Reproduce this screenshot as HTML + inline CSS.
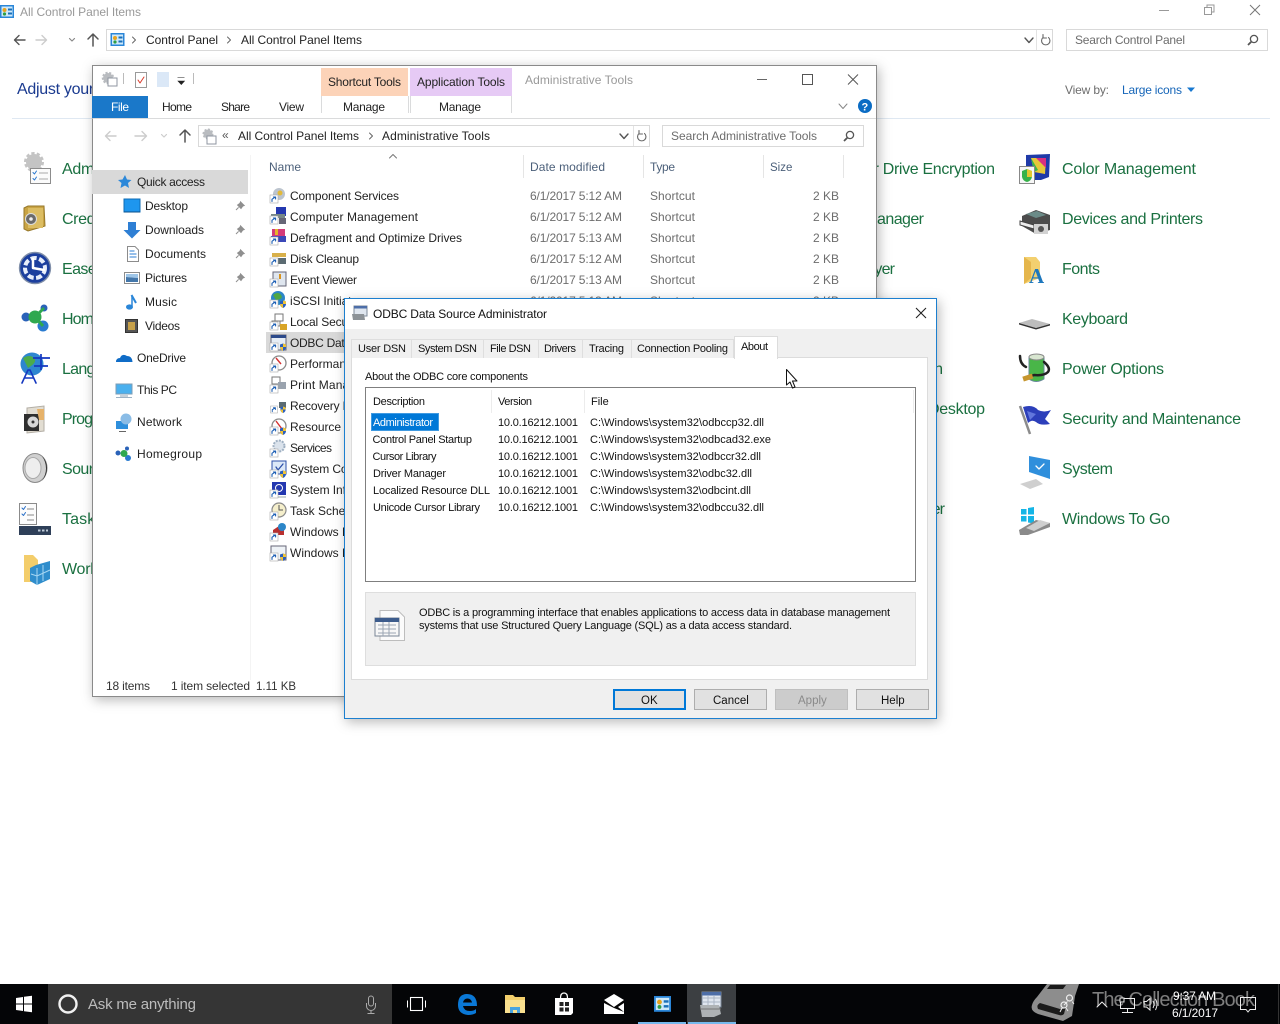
<!DOCTYPE html>
<html lang="en"><head><meta charset="utf-8"><title>ODBC Data Source Administrator</title>
<style>
html,body{margin:0;padding:0;background:#fff;overflow:hidden}
svg{display:block}
text{font-family:"Liberation Sans",Arial,sans-serif;font-size:12px;fill:#333;white-space:pre}
.cp{font-size:16px;fill:#1a7040}
.nm{fill:#222}.g{fill:#6d6d6d}.h{fill:#4c607a}
.dl{font-size:11px;fill:#111}
.bt{font-size:11.5px;fill:#111}
.ln{fill:none;stroke-linecap:round;stroke-linejoin:round}
</style></head><body>
<svg xmlns="http://www.w3.org/2000/svg" width="1280" height="1024" viewBox="0 0 1280 1024">
<defs>
<filter id="sh" x="-5%" y="-5%" width="110%" height="110%"><feDropShadow dx="2" dy="3" stdDeviation="6" flood-color="#000" flood-opacity=".28"/></filter>
<symbol id="cpi" viewBox="0 0 14 14" overflow="visible"><rect width="14" height="13" fill="#2a86d8"/><rect x="1.5" y="1.5" width="11" height="10" fill="#cfe9fa"/><circle cx="4.5" cy="5" r="2" fill="#e6a31e"/><circle cx="4.5" cy="9" r="1.6" fill="#2f9e44"/><rect x="8" y="3.5" width="4" height="2" fill="#1a6fb8"/><rect x="8" y="7.5" width="4" height="2" fill="#1a6fb8"/></symbol>
<symbol id="ar" viewBox="0 0 8 8" overflow="visible"><rect width="8" height="8" fill="#fff" stroke="#a8a8a8" stroke-width=".6"/><path d="M2 6.5 L2 4.2 L5.2 2.2 M3.4 2 L5.6 2 L5.6 4" class="ln" stroke="#1d5fb4" stroke-width="1.1"/></symbol>
<symbol id="shd" viewBox="0 0 8 8" overflow="visible"><path d="M1 1.5 L4 .5 L7 1.5 L7 4.5 Q6.5 7 4 8 Q1.5 7 1 4.5Z" fill="#2b5fbe"/><path d="M4 .5 L7 1.5 L7 4 L4 4Z M4 4 L1 4 Q1.5 7 4 8Z" fill="#f0c437"/></symbol>
<symbol id="pin" viewBox="0 0 10 10" overflow="visible"><path d="M5.5 .8 L9.2 4.5 L7.8 5 L6 7.5 L2.6 4.1 L5 2.3Z M3.6 6.4 L1 9" fill="#8f8f8f" stroke="#8f8f8f"/></symbol>
<symbol id="mag" viewBox="0 0 12 12" overflow="visible"><circle cx="7" cy="5" r="3.6" fill="none" stroke="#555" stroke-width="1.3"/><path d="M4.4 7.6 L1 11" stroke="#555" stroke-width="1.8" fill="none"/></symbol>
</defs>

<!-- Control Panel background window -->
<rect width="1280" height="1024" fill="#fff"/>
<use href="#cpi" x="0" y="5" width="14" height="14"/>
<text x="20" y="16" textLength="121" style="fill:#999">All Control Panel Items</text>
<path d="M1159 10.500H1169" stroke="#999" fill="none"/>
<path d="M1204.500 7.500h7v7h-7zM1207 7.500V5h7v7h-2.500" stroke="#999" fill="none"/>
<path d="M1250 5L1260 15M1260 5L1250 15" stroke="#777" fill="none"/>
<path d="M25 40H15M19 35.500L14.500 40L19 44.500" class="ln" stroke="#555" stroke-width="1.4"/>
<path d="M36 40H46M42 35.500L46.500 40L42 44.500" class="ln" stroke="#ccc" stroke-width="1.4"/>
<path d="M69.500 38.500L72 41L74.500 38.500" class="ln" stroke="#888" stroke-width="1.2"/>
<path d="M93 46V34.500M88 39L93 34L98 39" class="ln" stroke="#555" stroke-width="1.5"/>
<rect x="106.500" y="29.500" width="946" height="21" fill="#fff" stroke="#d9d9d9"/>
<path d="M1036.500 30V50" stroke="#e3e3e3"/>
<use href="#cpi" x="110" y="33" width="15" height="14"/>
<path d="M132.500 37L135.500 40L132.500 43" class="ln" stroke="#666"/>
<text x="146" y="44" textLength="72" class="nm">Control Panel</text>
<path d="M227.500 37L230.500 40L227.500 43" class="ln" stroke="#666"/>
<text x="241" y="44" textLength="121" class="nm">All Control Panel Items</text>
<path d="M1025 38L1029 42.500L1033 38" class="ln" stroke="#555" stroke-width="1.4"/>
<path d="M1043 37.500A4.200 4.200 0 1 0 1048.500 37.500M1043 34.500V38H1046.500" class="ln" stroke="#666" stroke-width="1.1"/>
<rect x="1066.500" y="29.500" width="201" height="21" fill="#fff" stroke="#d9d9d9"/>
<text x="1075" y="44" textLength="110" class="g">Search Control Panel</text>
<use href="#mag" x="1247" y="34" width="12" height="12"/>
<text x="17" y="94" textLength="214" style="font-size:16px;fill:#1a3a8f">Adjust your computer’s settings</text>
<path d="M12 118.500H1270" stroke="#dfe8f2"/>
<text x="1065" y="94" textLength="44" class="g">View by:</text>
<text x="1122" y="94" textLength="60" style="fill:#1565b8">Large icons</text>
<path d="M1187 87.500H1195L1191 92Z" fill="#1878d0"/>

<!-- Left column -->
<text x="62" y="174" class="cp" textLength="136">Administrative Tools</text>
<text x="62" y="224" class="cp" textLength="134">Credential Manager</text>
<text x="62" y="274" class="cp" textLength="150">Ease of Access Center</text>
<text x="62" y="324" class="cp" textLength="80">HomeGroup</text>
<text x="62" y="374" class="cp" textLength="66">Language</text>
<text x="62" y="424" class="cp" textLength="150">Programs and Features</text>
<text x="62" y="474" class="cp" textLength="44">Sound</text>
<text x="62" y="524" class="cp" textLength="170">Taskbar and Navigation</text>
<text x="62" y="574" class="cp" textLength="92">Work Folders</text>
<!-- Left icons -->
<circle cx="34" cy="162" r="8" fill="#c4c4c4" stroke="#c4c4c4" stroke-width="4" stroke-dasharray="3 2"/>
<rect x="30.500" y="168.500" width="20" height="15" fill="#fbfbfb" stroke="#8c8c8c"/>
<path d="M33 172.500l1.500 1.500 2-3M33 178.500l1.500 1.500 2-3" class="ln" stroke="#2c7ad0"/><path d="M39 173h9M39 179h9" stroke="#aaa"/>
<path d="M24 208L28 206H44L45 226L28 231L24 229Z" fill="#c9a444" stroke="#96772a"/><rect x="28" y="208" width="15" height="20" fill="#dcbd63"/><circle cx="31" cy="219" r="5.500" fill="#6b6b6b" stroke="#ddd"/><circle cx="31" cy="219" r="1.800" fill="#eee"/>
<circle cx="35" cy="268" r="15.500" fill="#1c3f9e" stroke="#7f8ea8" stroke-width="1.400"/><circle cx="35" cy="268" r="10" fill="none" stroke="#e8eefb" stroke-width="4" stroke-dasharray="6 2.500"/><path d="M33 259V268L44 270" class="ln" stroke="#fff" stroke-width="2.500"/>
<circle cx="26" cy="317" r="4.500" fill="#2a62b8"/><circle cx="44" cy="308" r="3.500" fill="#2a62b8"/><circle cx="43" cy="326" r="5.500" fill="#2a7bd0"/><circle cx="35" cy="317" r="6.500" fill="#2fa84f"/><path d="M35 317L44 308M35 317L43 326" stroke="#2fa84f" stroke-width="3"/>
<circle cx="32" cy="364" r="11.500" fill="#2e86d0"/><path d="M23 358Q30 354 34 358T28 368Z" fill="#4cab4a"/><path d="M33 358H50M41 354V370M34 366H48" stroke="#1538c0" stroke-width="1.700" fill="none"/><path d="M22 383L28 370H30L36 383M24.500 378H33.500" class="ln" stroke="#1538c0" stroke-width="1.600"/>
<path d="M27 408L44 406V431L27 433Z" fill="#e2ddd2" stroke="#b3aea5"/><rect x="24" y="414" width="15" height="17" fill="#2f2f2f"/><circle cx="33" cy="422" r="5.500" fill="#d8d8d8"/><circle cx="33" cy="422" r="1.500" fill="#333"/><path d="M37 409H44V420H39Z" fill="#e6b26a"/>
<ellipse cx="35" cy="468" rx="12" ry="14.500" fill="#d0d0d0" stroke="#8a8a8a"/><ellipse cx="33" cy="468" rx="8" ry="10.500" fill="#eee" stroke="#aaa"/><path d="M42 456Q50 468 42 481Q47 475 47 468T42 456" fill="#333"/>
<rect x="19.500" y="503.500" width="17" height="21" fill="#fcfcfc" stroke="#8b8b8b"/><path d="M22 508l1.500 1.500 2-3M22 514l1.500 1.500 2-3" class="ln" stroke="#2a70c8"/><path d="M27 509h7M27 515h7M27 520h7" stroke="#888"/><rect x="19" y="526" width="32" height="9" fill="#2e3f58"/><path d="M38 530.500h2.500M42 530.500h2.500M46 530.500h2" stroke="#bcc8d6" stroke-width="2"/>
<path d="M24 555H33L38 560V582H24Z" fill="#f3cd6b"/><path d="M36 565L50 561V579L37 585L30 581V568Z" fill="#2f8dcc"/><path d="M31 574L37 576L50 570M37 568V585M43 565V581" stroke="#a7d7f3" fill="none"/>

<!-- Middle column remnants -->
<text x="815" y="174" class="cp" textLength="180">BitLocker Drive Encryption</text>
<text x="815" y="224" class="cp" textLength="109">Device Manager</text>
<text x="815" y="274" class="cp" textLength="80">Flash Player</text>
<text x="840" y="374" class="cp" textLength="103">Personalization</text>
<text x="928" y="414" class="cp" textLength="57">Desktop</text>
<text x="865" y="514" class="cp" textLength="80">Sync Center</text>

<!-- Right column -->
<text x="1062" y="174" class="cp" textLength="134">Color Management</text>
<text x="1062" y="224" class="cp" textLength="141">Devices and Printers</text>
<text x="1062" y="274" class="cp" textLength="38">Fonts</text>
<text x="1062" y="324" class="cp" textLength="66">Keyboard</text>
<text x="1062" y="374" class="cp" textLength="102">Power Options</text>
<text x="1062" y="424" class="cp" textLength="179">Security and Maintenance</text>
<text x="1062" y="474" class="cp" textLength="51">System</text>
<text x="1062" y="524" class="cp" textLength="108">Windows To Go</text>
<!-- Right icons -->
<path d="M1026 155L1050 154L1049 177L1041 180H1026Z" fill="#1f3aa8"/><path d="M1031 158L1046 158L1045 174L1034 172Z" fill="#e6c73a"/><path d="M1036 158H1046V168Z" fill="#d9307f"/><path d="M1031 158L1038 170L1034 172Z" fill="#39b54a"/>
<rect x="1019.500" y="166.500" width="15" height="17" fill="#f7f7f7" stroke="#888"/><path d="M1022 171L1027 169L1032 171V177Q1031 181 1027 182Q1023 181 1022 177Z" fill="#36b24a"/><path d="M1027 169L1032 171V177H1027Z" fill="#e2c72f"/>
<path d="M1022 216L1036 210L1050 215L1050 230L1036 234L1022 226Z" fill="#4c4c4c"/><path d="M1026 214L1037 211L1046 215L1036 218Z" fill="#6b8b88"/><path d="M1020 221L1034 225V229L1020 225Z" fill="#eee" stroke="#444"/><rect x="1034" y="224" width="14" height="10" fill="#d2d2d2"/><circle cx="1041" cy="229" r="3" fill="#555"/>
<path d="M1024 257H1036L1040 262V278L1024 284Z" fill="#f3d06f"/><path d="M1024 257L1031 262V278L1024 284Z" fill="#e5b64c"/><text x="1029" y="283" style="font-family:'Liberation Serif',serif;font-size:21px;font-weight:700;fill:#1d77bd">A</text>
<path d="M1019 323L1032 319L1050 324L1036 328Z" fill="#bdbdbd"/><path d="M1019 323L1036 328L1050 324V325.500L1036 329.500L1019 324.500Z" fill="#333"/>
<path d="M1029 357Q1037 353 1044 357V379Q1036 384 1029 379Z" fill="#49b648" stroke="#689"/><ellipse cx="1036.500" cy="357" rx="7.500" ry="3" fill="#d8e6d0" stroke="#888"/><path d="M1020 356Q1020 364 1026 367M1044 362Q1051 368 1048 372Q1044 376 1034 375L1026 378" class="ln" stroke="#222" stroke-width="2.500"/><rect x="1023" y="375" width="10" height="5" transform="rotate(-18 1028 378)" fill="#c6962e"/>
<path d="M1020 406L1030 434" stroke="#8c8c8c" stroke-width="2.500"/><path d="M1023 407Q1033 404 1038 410Q1044 413 1051 410L1045 419L1050 424Q1040 426 1036 422Q1032 419 1028 423Z" fill="#2c3fba"/><path d="M1027 411L1036 414L1030 420Z" fill="#6277dc"/>
<path d="M1029 456L1050 460V479L1029 472Z" fill="#2f8fdc"/><path d="M1036 466l3 3 5-5" class="ln" stroke="#fff" stroke-width="1.300"/><path d="M1020 484L1036 479L1043 484L1030 489Z" fill="#cfcfcf"/>
<path d="M1021 509h5.500v5.500h-5.500zM1028 508v6.500h6v-7.500zM1021 516h5.500v5.500h-5.500zM1028 516h6v7.500l-6-1z" fill="#15b5e6"/><path d="M1019 530L1036 520L1050 523V527L1028 535H1020Z" fill="#8a8a8a"/><path d="M1026 528L1040 520L1050 523L1034 531Z" fill="#cfcfcf"/>

<!-- Explorer window -->
<rect x="92.500" y="65.500" width="784" height="631" fill="#fff" stroke="#8a8a8a" filter="url(#sh)"/>
<path d="M92.500 118.500H876" stroke="#dadbdc"/>
<circle cx="108" cy="78" r="5" fill="#b9bcc0" stroke="#b9bcc0" stroke-width="2.500" stroke-dasharray="2 1.500"/><rect x="108" y="78" width="9" height="8" fill="#fff" stroke="#8f96a0"/>
<path d="M123.500 73V84" stroke="#bbb"/>
<rect x="135.500" y="72.500" width="11" height="15" fill="#fff" stroke="#9a9a9a"/><path d="M138 80l2 3 4-6" class="ln" stroke="#d93a2b"/>
<rect x="157" y="72" width="12" height="15" fill="#dbe8f7"/>
<path d="M177.500 77.500h7M178 81h6.500l-3.200 3.500z" fill="#222" stroke="#222" stroke-width=".6"/>
<path d="M193.500 73V84" stroke="#bbb"/>
<rect x="321" y="68" width="87" height="28" fill="#fcd3b8"/><rect x="410" y="68" width="102" height="28" fill="#e6caf5"/>
<text x="328" y="86" textLength="73" class="nm">Shortcut Tools</text>
<text x="417" y="86" textLength="88" class="nm">Application Tools</text>
<text x="525" y="84" textLength="108" style="fill:#999">Administrative Tools</text>
<path d="M757 79.500H767" stroke="#666" fill="none"/><rect x="802.500" y="74.500" width="10" height="10" fill="none" stroke="#555"/><path d="M848 74.500L858 84.500M858 74.500L848 84.500" stroke="#555" fill="none"/>
<rect x="92" y="96" width="56" height="22" fill="#1a78c9"/>
<text x="111" y="111" textLength="18" style="fill:#fff">File</text>
<text x="162" y="111" textLength="30" class="nm">Home</text>
<text x="221" y="111" textLength="29" class="nm">Share</text>
<text x="279" y="111" textLength="25" class="nm">View</text>
<text x="343" y="111" textLength="42" class="nm">Manage</text>
<text x="439" y="111" textLength="42" class="nm">Manage</text>
<path d="M321.500 96V113M408.500 96V113M410.500 96V113M511.500 96V113" stroke="#dadbdc"/>
<path d="M839 104L843 108.500L847 104" class="ln" stroke="#888"/>
<circle cx="865" cy="106" r="7" fill="#0a6cc4"/><text x="861.500" y="110.500" style="font-weight:700;font-size:11px;fill:#fff">?</text>
<path d="M116 136H106M110 131.500L105.500 136L110 140.500" class="ln" stroke="#ccc" stroke-width="1.400"/>
<path d="M135 136H146M142 131.500L146.500 136L142 140.500" class="ln" stroke="#ccc" stroke-width="1.400"/>
<path d="M161.500 134.500L164 137L166.500 134.500" class="ln" stroke="#ccc" stroke-width="1.200"/>
<path d="M185 142V130.500M180 135L185 130L190 135" class="ln" stroke="#555" stroke-width="1.500"/>
<rect x="198.500" y="125.500" width="451" height="21" fill="#fff" stroke="#d9d9d9"/>
<path d="M633.500 126V146" stroke="#e3e3e3"/>
<circle cx="208" cy="134" r="4.500" fill="#b9bcc0" stroke="#b9bcc0" stroke-width="2" stroke-dasharray="2 1.500"/><rect x="207" y="136" width="9" height="8" fill="#fff" stroke="#8f96a0"/>
<text x="222" y="139" style="fill:#555">«</text>
<text x="238" y="140" textLength="121" class="nm">All Control Panel Items</text>
<path d="M369.500 133L372.500 136L369.500 139" class="ln" stroke="#666"/>
<text x="382" y="140" textLength="108" class="nm">Administrative Tools</text>
<path d="M620 134L624 138.500L628 134" class="ln" stroke="#555" stroke-width="1.400"/>
<path d="M639 133.500A4.200 4.200 0 1 0 644.500 133.500M639 130.500V134H642.500" class="ln" stroke="#666" stroke-width="1.100"/>
<rect x="662.500" y="125.500" width="201" height="21" fill="#fff" stroke="#d9d9d9"/>
<text x="671" y="140" textLength="146" class="g">Search Administrative Tools</text>
<use href="#mag" x="843" y="130" width="12" height="12"/>

<!-- Nav pane -->
<path d="M250.500 155V680" stroke="#f4f4f4"/>
<rect x="92" y="170" width="156" height="24" fill="#d9d9d9"/>
<path d="M125 175L127 179.500L131.500 180L128 183L129 188L125 185.500L120.500 188L121.500 183L118 180L122.500 179.500Z" fill="#2c88d9"/>
<text x="137" y="186" textLength="68" class="nm">Quick access</text>
<rect x="124" y="199" width="16" height="13" fill="#1e96ee" stroke="#0f6cb5"/><path d="M124 212h16" stroke="#0a4f8a"/>
<text x="145" y="210" textLength="43" class="nm">Desktop</text>
<path d="M128 222H136V230H140.500L132 238.500L123.500 230H128Z" fill="#2e7fd4"/>
<text x="145" y="234" textLength="59" class="nm">Downloads</text>
<path d="M127.500 246.500H135L138.500 250V261.500H127.500Z" fill="#fff" stroke="#8c8c8c"/><path d="M129.500 251h5M129.500 254h7M129.500 257h7" stroke="#2e7fd4"/>
<text x="145" y="258" textLength="61" class="nm">Documents</text>
<rect x="124.500" y="272.500" width="15" height="11" fill="#fff" stroke="#8c8c8c"/><path d="M126 274h12v4l-12-1z" fill="#9fc6e8"/><path d="M126 277l12 1v4h-12z" fill="#47a"/>
<text x="145" y="282" textLength="42" class="nm">Pictures</text>
<path d="M131.500 295L136 303" stroke="#2a86d8" stroke-width="2" fill="none"/><path d="M132 296V306" stroke="#2a86d8" stroke-width="1.500"/><ellipse cx="129.500" cy="307" rx="3.500" ry="2.600" fill="#2a86d8"/>
<text x="145" y="306" textLength="32" class="nm">Music</text>
<rect x="125.500" y="319.500" width="12" height="13" fill="#555" stroke="#333"/><rect x="128" y="322" width="7" height="8" fill="#c7a14a"/>
<text x="145" y="330" textLength="35" class="nm">Videos</text>
<use href="#pin" x="235" y="201" width="10" height="10"/><use href="#pin" x="235" y="225" width="10" height="10"/><use href="#pin" x="235" y="249" width="10" height="10"/><use href="#pin" x="235" y="273" width="10" height="10"/>
<path d="M116 362Q116 358 120 358Q122 353 127 356Q132 356 132.500 362Z" fill="#0f6cc7"/>
<text x="137" y="362" textLength="49" class="nm">OneDrive</text>
<rect x="116" y="384" width="16" height="10" fill="#4ab0ee" stroke="#7e9db5"/><path d="M116 397.500h16" stroke="#9db2c4"/><path d="M120 396h8" stroke="#8fa3b5"/>
<text x="137" y="394" textLength="40" class="nm">This PC</text>
<rect x="116" y="421" width="12" height="8" fill="#2e8fdc"/><circle cx="126" cy="419" r="5.500" fill="#8abce6"/><path d="M119 431.500h7" stroke="#666"/>
<text x="137" y="426" textLength="45" class="nm">Network</text>
<circle cx="118" cy="453" r="2.500" fill="#2a62b8"/><circle cx="127" cy="448.500" r="2" fill="#2a62b8"/><circle cx="128" cy="458" r="3" fill="#2a7bd0"/><circle cx="124" cy="453.500" r="3.500" fill="#2fa84f"/>
<text x="137" y="458" textLength="65" class="nm">Homegroup</text>

<!-- Column header -->
<path d="M389.500 158L393 154.500L396.500 158" class="ln" stroke="#777"/>
<text x="269" y="171" textLength="32" class="h">Name</text>
<text x="530" y="171" textLength="75" class="h">Date modified</text>
<text x="650" y="171" textLength="25" class="h">Type</text>
<text x="770" y="171" class="h" style="font-size:11.5px">Size</text>
<path d="M523.500 155V178M643.500 155V178M763.500 155V178M843.500 155V178" stroke="#e5e5e5"/>

<!-- Selected row -->
<rect x="266" y="332" width="100" height="21" fill="#d9d9d9"/>

<!-- File icons -->
<g>
<circle cx="279" cy="194" r="6" fill="#bcc4ce"/><circle cx="280" cy="193" r="2.500" fill="#e2b93a"/><use href="#ar" x="270" y="195" width="8" height="8"/>
<rect x="276" y="207" width="10" height="9" fill="#2438b0"/><rect x="271" y="214" width="14" height="4" fill="#788"/><use href="#ar" x="270" y="216" width="8" height="8"/><rect x="279" y="218" width="7" height="6" fill="#667"/>
<rect x="272" y="229" width="13" height="8" fill="#d43b7a"/><rect x="271" y="236" width="15" height="6" fill="#3b48b8"/><rect x="275" y="229" width="3" height="6" fill="#e6b52a"/><use href="#ar" x="270" y="237" width="8" height="8"/>
<rect x="272" y="253" width="14" height="4" fill="#d8b04a"/><rect x="272" y="258" width="14" height="6" fill="#5b6b72"/><use href="#ar" x="270" y="258" width="8" height="8"/>
<rect x="273" y="272" width="13" height="14" fill="#dfe6ef" stroke="#667"/><path d="M279 274h2v5h-2z" fill="#d8931e"/><use href="#ar" x="270" y="279" width="8" height="8"/>
<circle cx="278" cy="298" r="7" fill="#2c86c8"/><path d="M273 295q5-4 8 0t-5 5z" fill="#4fa743"/><use href="#ar" x="270" y="300" width="8" height="8"/><use href="#shd" x="279" y="300" width="8" height="8"/>
<rect x="275" y="314" width="8" height="7" fill="#fff" stroke="#777"/><rect x="272" y="321" width="8" height="5" fill="#fff" stroke="#777"/><use href="#ar" x="270" y="322" width="8" height="8"/><rect x="280" y="324" width="7" height="6" fill="#d8a426"/>
<rect x="271" y="335" width="15" height="15" fill="#e6edf5" stroke="#667"/><rect x="271" y="335" width="15" height="3" fill="#2d4a8a"/><use href="#ar" x="270" y="343" width="8" height="8"/><use href="#shd" x="279" y="343" width="8" height="8"/>
<circle cx="279" cy="363" r="7" fill="#fff" stroke="#8a8a8a" stroke-width="1.300"/><path d="M276 358L281 364" stroke="#d43030" stroke-width="1.400"/><use href="#ar" x="270" y="364" width="8" height="8"/>
<rect x="272" y="377" width="8" height="7" fill="#fff" stroke="#777"/><rect x="278" y="382" width="8" height="7" fill="#9aa3ae"/><use href="#ar" x="270" y="385" width="8" height="8"/>
<rect x="279" y="402" width="7" height="6" fill="#5b6b72"/><use href="#ar" x="270" y="406" width="8" height="7"/><use href="#shd" x="279" y="406" width="8" height="7"/>
<circle cx="279" cy="426" r="7" fill="#fff" stroke="#8a8a8a" stroke-width="1.300"/><path d="M276 421L282 429" stroke="#d43030" stroke-width="1.400"/><use href="#ar" x="270" y="427" width="8" height="8"/><use href="#shd" x="279" y="427" width="8" height="8"/>
<circle cx="279" cy="446" r="5.500" fill="#dbe3ec" stroke="#9fb0c2" stroke-width="2" stroke-dasharray="2 1.200"/><use href="#ar" x="270" y="449" width="8" height="8"/>
<rect x="272" y="461" width="14" height="13" fill="#dce8f8" stroke="#2c4fa8"/><path d="M276 467l2 3 5-6" class="ln" stroke="#2c4fa8" stroke-width="1.300"/><use href="#ar" x="270" y="470" width="8" height="8"/><use href="#shd" x="279" y="470" width="8" height="8"/>
<rect x="272" y="482" width="14" height="13" fill="#2438b0"/><circle cx="279" cy="488" r="3.500" fill="none" stroke="#fff"/><path d="M270 497h16" stroke="#9aa"/><use href="#ar" x="270" y="490" width="8" height="8"/>
<circle cx="279" cy="510" r="7" fill="#f5efcc" stroke="#8a8a8a" stroke-width="1.200"/><path d="M279 505V510H283" stroke="#555" fill="none"/><use href="#ar" x="270" y="512" width="8" height="8"/>
<path d="M273 530L279 526L284 530V535H273Z" fill="#b83030"/><circle cx="282" cy="527" r="4" fill="#2c86c8"/><use href="#ar" x="270" y="533" width="8" height="8"/>
<rect x="271" y="546" width="15" height="14" fill="#eef2f6" stroke="#667"/><use href="#ar" x="270" y="553" width="8" height="8"/><use href="#shd" x="279" y="553" width="8" height="8"/>
</g>

<!-- File rows -->
<text x="290" y="200" textLength="109" class="nm">Component Services</text>
<text x="290" y="221" textLength="128" class="nm">Computer Management</text>
<text x="290" y="242" textLength="172" class="nm">Defragment and Optimize Drives</text>
<text x="290" y="263" textLength="69" class="nm">Disk Cleanup</text>
<text x="290" y="284" textLength="67" class="nm">Event Viewer</text>
<text x="290" y="305" textLength="72" class="nm">iSCSI Initiator</text>
<text x="290" y="326" textLength="108" class="nm">Local Security Policy</text>
<text x="290" y="347" textLength="145" class="nm">ODBC Data Sources (32-bit)</text>
<text x="290" y="368" textLength="112" class="nm">Performance Monitor</text>
<text x="290" y="389" textLength="100" class="nm">Print Management</text>
<text x="290" y="410" textLength="80" class="nm">Recovery Drive</text>
<text x="290" y="431" textLength="94" class="nm">Resource Monitor</text>
<text x="290" y="452" textLength="42" class="nm">Services</text>
<text x="290" y="473" textLength="112" class="nm">System Configuration</text>
<text x="290" y="494" textLength="102" class="nm">System Information</text>
<text x="290" y="515" textLength="82" class="nm">Task Scheduler</text>
<text x="290" y="536" class="nm">Windows Firewall</text>
<text x="290" y="557" class="nm">Windows Memory Diagnostic</text>
<g class="g">
<text x="530" y="200" textLength="92" class="g">6/1/2017 5:12 AM</text><text x="650" y="200" textLength="45" class="g">Shortcut</text><text x="813" y="200" class="g">2 KB</text>
<text x="530" y="221" textLength="92" class="g">6/1/2017 5:12 AM</text><text x="650" y="221" textLength="45" class="g">Shortcut</text><text x="813" y="221" class="g">2 KB</text>
<text x="530" y="242" textLength="92" class="g">6/1/2017 5:13 AM</text><text x="650" y="242" textLength="45" class="g">Shortcut</text><text x="813" y="242" class="g">2 KB</text>
<text x="530" y="263" textLength="92" class="g">6/1/2017 5:12 AM</text><text x="650" y="263" textLength="45" class="g">Shortcut</text><text x="813" y="263" class="g">2 KB</text>
<text x="530" y="284" textLength="92" class="g">6/1/2017 5:13 AM</text><text x="650" y="284" textLength="45" class="g">Shortcut</text><text x="813" y="284" class="g">2 KB</text>
<text x="530" y="305" textLength="92" class="g">6/1/2017 5:13 AM</text><text x="650" y="305" textLength="45" class="g">Shortcut</text><text x="813" y="305" class="g">2 KB</text>
</g>

<!-- Status bar -->
<text x="106" y="690" textLength="44">18 items</text>
<text x="171" y="690" textLength="79">1 item selected</text>
<text x="256" y="690" style="font-size:11.5px">1.11 KB</text>

<!-- ODBC dialog -->
<rect x="344.500" y="298.500" width="592" height="420" fill="#f0f0f0" stroke="#1a7fcf" filter="url(#sh)"/>
<rect x="345" y="299" width="591" height="30" fill="#fff"/>
<rect x="354" y="306" width="13" height="10" fill="#dfe6ef" stroke="#7d8a9a"/><rect x="354" y="306" width="13" height="2.500" fill="#4d6ea8"/><path d="M352 314H364L365 320H353Z" fill="#8c9297"/>
<text x="373" y="318" textLength="174" style="fill:#111">ODBC Data Source Administrator</text>
<path d="M916 308L926 318M926 308L916 318" stroke="#222" stroke-width="1.100" fill="none"/>

<rect x="351.500" y="357.500" width="576" height="322" fill="#fff" stroke="#dcdcdc"/>
<path d="M351.500 358V339.500H733.500V358M411.500 340V358M483.500 340V358M538.500 340V358M582.500 340V358M631.500 340V358" fill="#f0f0f0" stroke="#dedede"/>
<rect x="734.500" y="336.500" width="43" height="22" fill="#fff" stroke="#dcdcdc"/><rect x="735" y="355" width="42" height="4" fill="#fff"/>
<text x="358" y="352" textLength="48" class="dl">User DSN</text>
<text x="418" y="352" textLength="59" class="dl">System DSN</text>
<text x="490" y="352" textLength="41" class="dl">File DSN</text>
<text x="544" y="352" textLength="32" class="dl">Drivers</text>
<text x="589" y="352" textLength="35" class="dl">Tracing</text>
<text x="637" y="352" textLength="91" class="dl">Connection Pooling</text>
<text x="741" y="350" textLength="27" class="dl">About</text>

<text x="365" y="380" textLength="163" class="dl">About the ODBC core components</text>
<rect x="365.500" y="387.500" width="550" height="194" fill="#fff" stroke="#7f7f7f"/>
<path d="M491.500 390V413M584.500 390V413M913.500 390V413" stroke="#ececec"/>
<text x="373" y="405" textLength="52" class="dl">Description</text>
<text x="498" y="405" textLength="34" class="dl">Version</text>
<text x="591" y="405" class="dl">File</text>
<rect x="371" y="413" width="68" height="18" fill="#0078d7"/><rect x="371.500" y="413.500" width="67" height="17" fill="none" stroke="#fff" stroke-dasharray="1 1" stroke-opacity=".5"/>
<text x="373" y="426" textLength="60" class="dl" style="fill:#fff">Administrator</text>
<text x="372.500" y="443" textLength="99.500" class="dl">Control Panel Startup</text>
<text x="372.500" y="460" textLength="64" class="dl">Cursor Library</text>
<text x="373" y="477" textLength="73" class="dl">Driver Manager</text>
<text x="373" y="494" textLength="117" class="dl">Localized Resource DLL</text>
<text x="373" y="511" textLength="107" class="dl">Unicode Cursor Library</text>
<text x="498" y="426" textLength="80" class="dl">10.0.16212.1001</text>
<text x="498" y="443" textLength="80" class="dl">10.0.16212.1001</text>
<text x="498" y="460" textLength="80" class="dl">10.0.16212.1001</text>
<text x="498" y="477" textLength="80" class="dl">10.0.16212.1001</text>
<text x="498" y="494" textLength="80" class="dl">10.0.16212.1001</text>
<text x="498" y="511" textLength="80" class="dl">10.0.16212.1001</text>
<text x="590" y="426" textLength="174" class="dl">C:\Windows\system32\odbccp32.dll</text>
<text x="590" y="443" textLength="181" class="dl">C:\Windows\system32\odbcad32.exe</text>
<text x="590" y="460" textLength="171" class="dl">C:\Windows\system32\odbccr32.dll</text>
<text x="590" y="477" textLength="162" class="dl">C:\Windows\system32\odbc32.dll</text>
<text x="590" y="494" textLength="161" class="dl">C:\Windows\system32\odbcint.dll</text>
<text x="590" y="511" textLength="174" class="dl">C:\Windows\system32\odbccu32.dll</text>

<rect x="365.500" y="592.500" width="550" height="73" fill="#f0f0f0" stroke="#dedede"/>
<path d="M380 610.500H398L404.500 617V640.500H380Z" fill="#fbfbfb" stroke="#bdbdbd"/>
<rect x="375" y="618" width="24" height="18" fill="#f7f7f7" stroke="#7a8696"/><rect x="375" y="618" width="24" height="4" fill="#3d5c8c"/>
<path d="M378 625h18M378 629h18M378 633h18M383 622v14M389 622v14" stroke="#9ba6b3"/>
<text x="419" y="616" textLength="471" class="dl">ODBC is a programming interface that enables applications to access data in database management</text>
<text x="419" y="629" textLength="373" class="dl">systems that use Structured Query Language (SQL) as a data access standard.</text>

<rect x="614" y="690" width="71" height="19" fill="#e1e1e1" stroke="#0078d7" stroke-width="2"/>
<rect x="694.500" y="689.500" width="72" height="20" fill="#e1e1e1" stroke="#adadad"/>
<rect x="775.500" y="689.500" width="72" height="20" fill="#cccccc" stroke="#bfbfbf"/>
<rect x="856.500" y="689.500" width="72" height="20" fill="#e1e1e1" stroke="#adadad"/>
<text x="641" y="704" class="bt">OK</text>
<text x="713" y="704" class="bt">Cancel</text>
<text x="798" y="704" class="bt" style="fill:#8a8a8a">Apply</text>
<text x="881" y="704" class="bt">Help</text>

<!-- Cursor -->
<path d="M786.500 369.500V385L790 382L792.500 388L795 387L792.500 381L797 381Z" fill="#fff" stroke="#111" stroke-linejoin="round"/>

<!-- Taskbar -->
<rect x="0" y="984" width="1280" height="40" fill="#040507"/>
<path d="M16 998L23 997V1003.500H16ZM24 996.800L32 995.700V1003.500H24ZM16 1004.500H23V1011L16 1010ZM24 1004.500H32V1012.300L24 1011.200Z" fill="#fff"/>
<rect x="48" y="984" width="344" height="40" fill="#353535"/>
<circle cx="68" cy="1004" r="8.500" fill="none" stroke="#f0f0f0" stroke-width="2.400"/>
<text x="88" y="1009" textLength="108" style="font-size:15px;fill:#bcbcbc">Ask me anything</text>
<rect x="368.500" y="996" width="5" height="10" rx="2.500" fill="none" stroke="#aaa"/><path d="M366.500 1003V1006A4.500 4.500 0 0 0 375.500 1006V1003M371 1011V1013M367.500 1013.500H374.500" fill="none" stroke="#aaa"/>
<rect x="410.500" y="997.500" width="12" height="13" fill="none" stroke="#fff" stroke-width="1.100"/><path d="M407.500 1000.500V1007.500M425.500 1000.500V1007.500" stroke="#fff"/>
<path d="M458 1005Q458 994 467 994Q477 994 477 1006H463Q464 1011 470 1011Q474 1011 476 1009V1013Q473 1015 468 1015Q458 1014 458 1005ZM463 1002.500H472Q471 998.500 467.500 998.500Q464 998.500 463 1002.500Z" fill="#0a78d6" fill-rule="evenodd"/>
<path d="M505 995H513L515 997H525V1013H505Z" fill="#f3cf6c"/><path d="M505 1000H525V1013H505Z" fill="#f9e08f"/><rect x="510" y="1007" width="10" height="6" fill="#49a4e0"/><rect x="513" y="1010" width="4" height="3" fill="#f9e08f"/>
<path d="M555 998H573V1013L571 1015H555Z" fill="#fff"/><path d="M560.500 998Q560.500 993 564 993Q567.500 993 567.500 998" fill="none" stroke="#fff" stroke-width="1.200"/><path d="M559.500 1002h4v4h-4zM565 1002h4v4h-4zM559.500 1007.500h4v4h-4zM565 1007.500h4v4h-4z" fill="#222"/>
<path d="M604 1000L614 994L624 1000V1014H604Z" fill="#fff"/><path d="M604 1000L614 1007L624 1000V1003L618 1007L624 1012L614 1008L604 1003Z" fill="#050505"/>
<rect x="638" y="1022" width="48" height="2" fill="#76b9ed"/>
<rect x="687" y="984" width="49" height="40" fill="#3c3f42"/><rect x="688" y="1022" width="48" height="2" fill="#76b9ed"/>
<use href="#cpi" x="652" y="996" width="21" height="17"/>
<rect x="702" y="992" width="19" height="15" fill="#e0e6f0" stroke="#7d8a9a"/><rect x="702" y="992" width="19" height="3.500" fill="#4d6ea8"/><path d="M702 998h19M702 1002h19M708 996v11M714 996v11" stroke="#aab5c5"/>
<path d="M700 1005H719L721 1014L714 1017H702Z" fill="#aeb2b5"/><path d="M700 1009H721" stroke="#777"/>

<!-- Watermark book -->
<path d="M1055 984H1079L1075 996L1072 1016L1063 1021L1038 1014Q1030 1011 1032 1005Q1033 1001 1037 997L1047 984Z" fill="#8d8d8d"/>
<path d="M1050 985H1066L1063 989H1047Z" fill="#1b1b1b"/>
<path d="M1040 1003L1060 1009Q1064 1010 1066 1006L1064 1014Q1062 1016 1059 1015L1038 1009Q1036 1005 1040 1003Z" fill="#1b1b1b"/>
<circle cx="1069.500" cy="998" r="3" fill="none" stroke="#eee" stroke-width="1.200"/><path d="M1064 1005L1067.500 1001.500M1072 1001.500L1074 1004" stroke="#eee" fill="none"/>
<circle cx="1064" cy="1005" r="3" fill="none" stroke="#eee" stroke-width="1.200"/><path d="M1060 1012L1062 1008M1066 1008L1068 1011" stroke="#eee" fill="none"/>
<text x="1092" y="1006" textLength="163" style="font-size:20px;fill:#7e7e7e">The Collection Book</text>

<!-- Tray -->
<path d="M1097 1007L1102 1002L1107 1007" class="ln" stroke="#eee"/>
<rect x="1120.500" y="998.500" width="14" height="10" fill="none" stroke="#eee"/><path d="M1127.500 1009V1012M1122 1012.500H1133" stroke="#eee"/><rect x="1120" y="998" width="4" height="4" fill="#040507" stroke="#eee"/>
<path d="M1144 1001.500H1146.500L1150 998.500V1010L1146.500 1007H1144ZM1153 1001Q1155 1004 1153 1008M1155.500 999Q1158.500 1004 1155.500 1010" fill="none" stroke="#eee"/>
<text x="1173" y="1000" textLength="43" style="fill:#fff">9:37 AM</text>
<text x="1172" y="1017" textLength="46" style="fill:#fff">6/1/2017</text>
<path d="M1240.500 997.500H1255.500V1009.500H1250L1248 1012L1246 1009.500H1240.500Z" fill="none" stroke="#eee"/>
<path d="M1278.500 984V1024" stroke="#333"/>
</svg>
</body></html>
